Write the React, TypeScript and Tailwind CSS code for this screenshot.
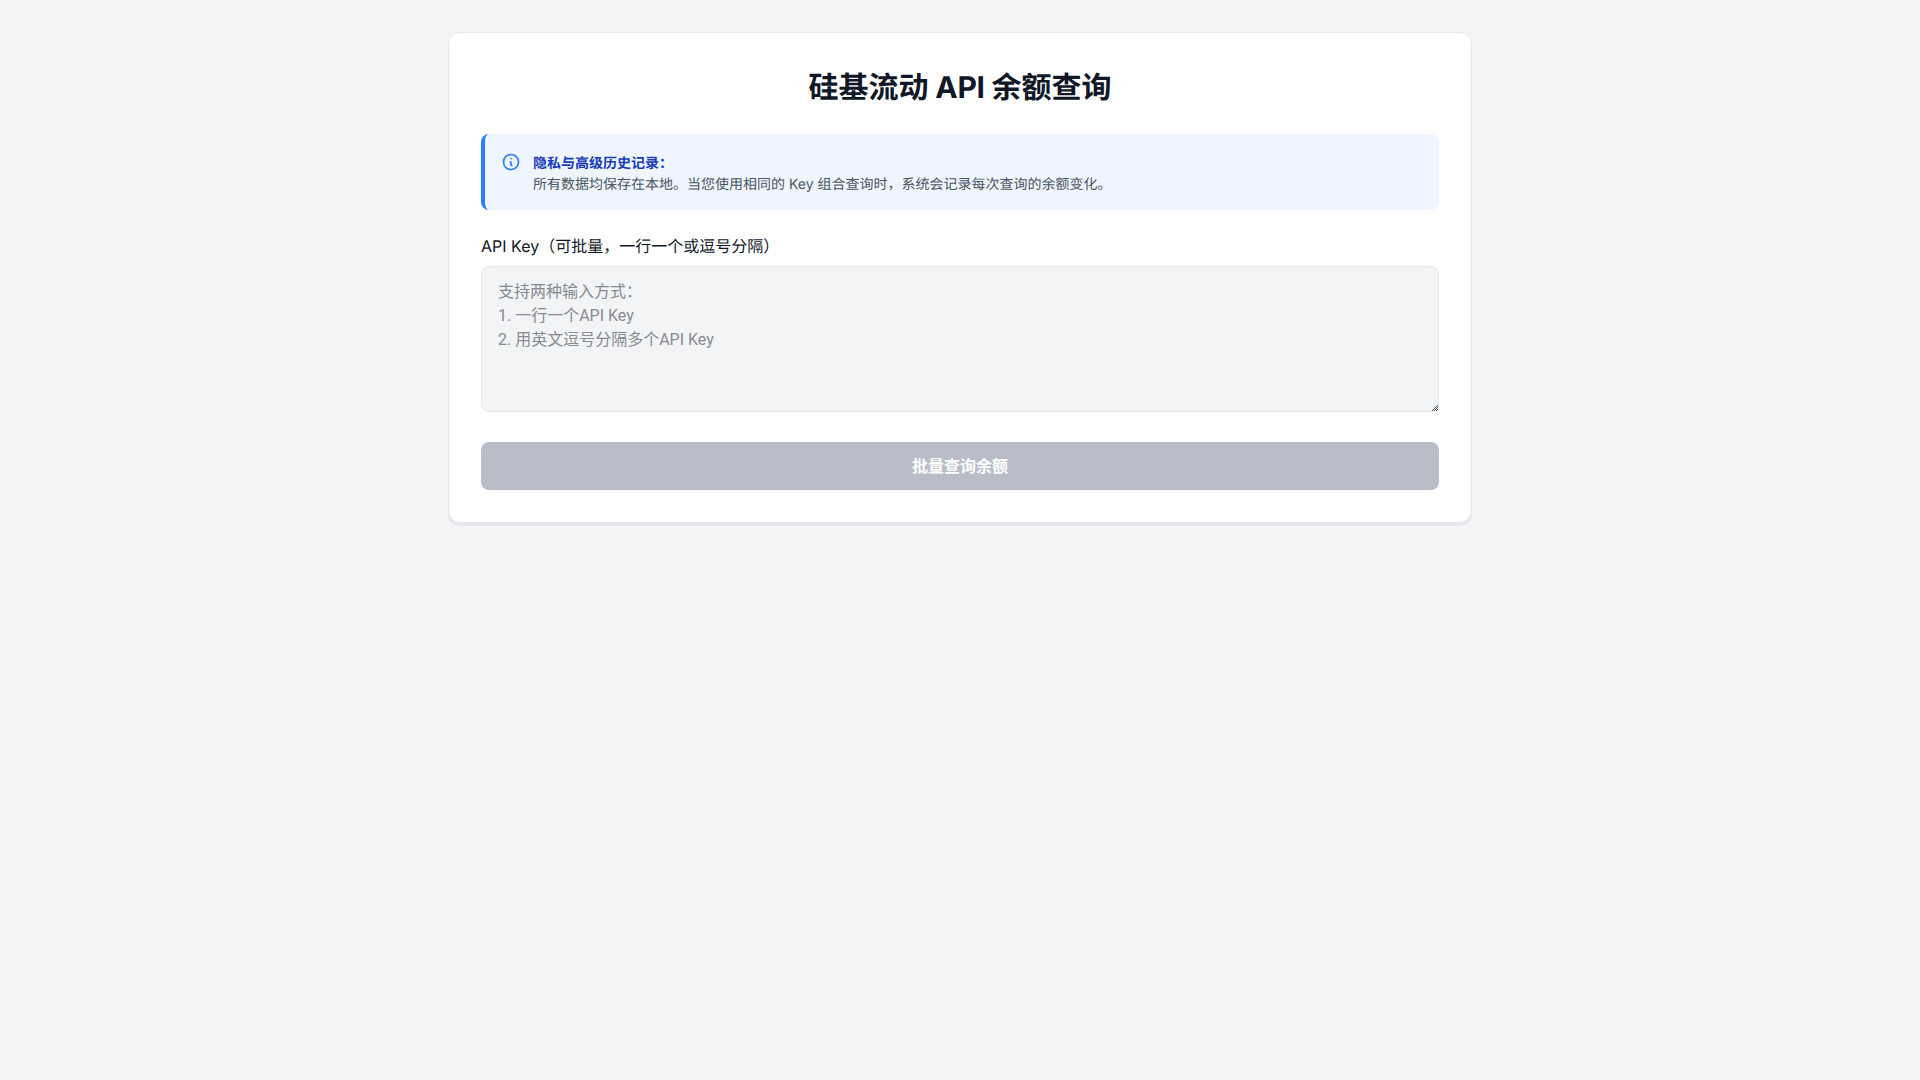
export default function App() {
  return (
    <div className="min-h-screen bg-gray-100 font-['Inter','Noto_Sans_CJK_SC',sans-serif] leading-normal py-8 antialiased [text-rendering:geometricPrecision]">
      <div className="mx-auto max-w-[1024px] rounded-xl border border-gray-200 bg-white p-8 shadow-[0_3px_0_0_#e5e7eb]">
        <h1 className="mb-[23px] pt-px text-center text-3xl leading-normal font-bold text-gray-900">
          硅基流动<span className="tracking-[-0.01em]"> API </span>余额查询
        </h1>

        <div className="mb-6 flex rounded-lg border-l-4 border-blue-500 bg-blue-50 px-4 pt-[18px] pb-[15px]">
          <svg viewBox="0 0 24 24" fill="none" stroke="currentColor" strokeWidth={2} strokeLinecap="round" strokeLinejoin="round" className="mr-3 h-5 w-5 shrink-0 text-blue-500">
            <path d="M13 16h-1v-4h-1m1-4h.01M21 12a9 9 0 11-18 0 9 9 0 0118 0z" />
          </svg>
          <div className="pt-px text-sm leading-normal">
            <p className="font-bold text-blue-800">隐私与高级历史记录：</p>
            <p className="text-gray-600">所有数据均保存在本地。当您使用相同的 Key 组合查询时，系统会记录每次查询的余额变化。</p>
          </div>
        </div>

        <div className="mb-[30px]">
          <label className="mb-2 block text-gray-900">API Key（可批量，一行一个或逗号分隔）</label>
          <div className="relative">
            <textarea
              rows={5}
              className="block w-full resize-none rounded-lg border border-gray-200 bg-gray-100 px-4 pt-[13px] pb-[11px] font-['Roboto','Noto_Sans_CJK_SC',sans-serif] outline-none placeholder:text-[#858a93]"
              placeholder={'支持两种输入方式：\n1. 一行一个API Key\n2. 用英文逗号分隔多个API Key'}
            />
            {/* textarea resize grip */}
            <svg viewBox="0 0 6 6" aria-hidden="true" className="absolute right-[1px] bottom-[1px] h-[6px] w-[6px] text-gray-600" fill="currentColor">
              <path d="M5 0h1v1H5zM4 1h1v1H4zM3 2h1v1H3zM2 3h1v1H2zM1 4h1v1H1zM0 5h1v1H0zM5 2h1v1H5zM4 3h1v1H4zM3 4h1v1H3zM2 5h1v1H2zM5 4h1v1H5zM4 5h1v1H4z" />
            </svg>
          </div>
        </div>

        <button disabled className="block h-12 w-full rounded-lg bg-[#b9bdc7] font-bold text-white">
          批量查询余额
        </button>
      </div>
    </div>
  );
}
